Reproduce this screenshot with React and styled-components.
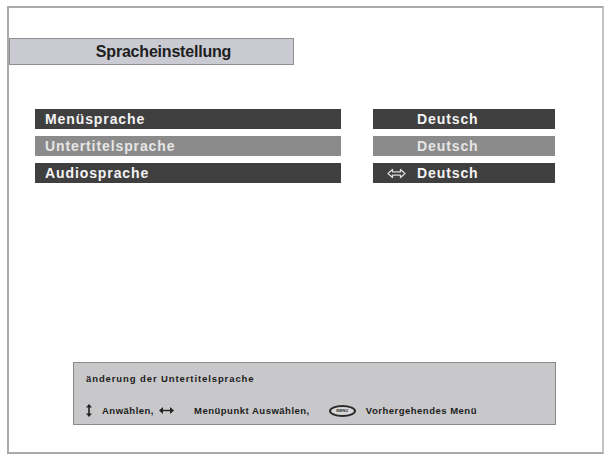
import React from "react";
import styled, { createGlobalStyle } from "styled-components";

const GlobalStyle = createGlobalStyle`
  html, body {
    margin: 0;
    padding: 0;
    background: #ffffff;
  }
  body {
    font-family: "Liberation Sans", Arial, sans-serif;
  }
`;

const rows = [
  { label: "Menüsprache", value: "Deutsch", tone: "dark" },
  { label: "Untertitelsprache", value: "Deutsch", tone: "light" },
  { label: "Audiosprache", value: "Deutsch", tone: "dark", arrow: true },
];

const App = () => {
  return (
    <Page>
      <GlobalStyle />
      <Frame>
        <Title>Spracheinstellung</Title>
        <Rows>
          {rows.map((r) => (
            <Row key={r.label}>
              <Label tone={r.tone}>{r.label}</Label>
              <Value tone={r.tone}>
                <ArrowSlot>{r.arrow && <SwapIcon />}</ArrowSlot>
                {r.value}
              </Value>
            </Row>
          ))}
        </Rows>
        <InfoBox>
          <InfoText>änderung der Untertitelsprache</InfoText>
          <Hints>
            <Hint $gap={10}>
              <UpDownIcon />
              Anwählen,
            </Hint>
            <Hint $gap={20} $space={5}>
              <LeftRightIcon />
              Menüpunkt Auswählen,
            </Hint>
            <Hint $gap={10} $space={19}>
              <MenuKey>MENU</MenuKey>
              Vorhergehendes Menü
            </Hint>
          </Hints>
        </InfoBox>
      </Frame>
    </Page>
  );
};

export default App;

const SwapIcon = () => (
  <svg width="19" height="11" viewBox="0 0 19 11">
    <path
      d="M1 5.5 L5.5 1.5 L5.5 3.8 L13.5 3.8 L13.5 1.5 L18 5.5 L13.5 9.5 L13.5 7.2 L5.5 7.2 L5.5 9.5 Z"
      fill="none"
      stroke="#dcdcdc"
      strokeWidth="1.3"
      strokeLinejoin="round"
    />
  </svg>
);

const UpDownIcon = () => (
  <svg width="6" height="13" viewBox="0 0 6 13">
    <path d="M3 0 L6 3.5 L0 3.5 Z M3 13 L6 9.5 L0 9.5 Z" fill="#222" />
    <rect x="2.2" y="3" width="1.6" height="7" fill="#222" />
  </svg>
);

const LeftRightIcon = () => (
  <svg width="15" height="7" viewBox="0 0 15 7">
    <path d="M0 3.5 L4 0 L4 7 Z M15 3.5 L11 0 L11 7 Z" fill="#222" />
    <rect x="3.5" y="2.8" width="8" height="1.4" fill="#222" />
  </svg>
);

const Page = styled.div`
  width: 607px;
  height: 456px;
  padding: 6px 0 0 7px;
  box-sizing: border-box;
`;

const Frame = styled.div`
  width: 597px;
  height: 448px;
  box-sizing: border-box;
  border: 2px solid #a9a9a9;
  border-right-color: #c4c4c4;
  display: flex;
  flex-direction: column;
`;

const Title = styled.div`
  margin-top: 30px;
  width: 285px;
  height: 27px;
  box-sizing: border-box;
  padding-left: 24px;
  background: #c9cad2;
  border: 1px solid #8f8f93;
  display: flex;
  align-items: center;
  justify-content: center;
  font-size: 16px;
  font-weight: bold;
  letter-spacing: -0.2px;
  color: #1e1e1e;
`;

const Rows = styled.div`
  margin-top: 44px;
  padding-left: 26px;
  display: flex;
  flex-direction: column;
  gap: 7px;
`;

const Row = styled.div`
  display: flex;
  gap: 32px;
  height: 20px;
`;

const Bar = styled.div`
  height: 20px;
  box-sizing: border-box;
  display: flex;
  align-items: center;
  font-size: 14px;
  font-weight: bold;
  letter-spacing: 0.9px;
  background: ${(p) => (p.tone === "light" ? "#8b8b8b" : "#3f3f3f")};
  color: ${(p) => (p.tone === "light" ? "#e6e6e6" : "#f4f4f4")};
`;

const Label = styled(Bar)`
  width: 306px;
  padding-left: 10px;
`;

const Value = styled(Bar)`
  width: 182px;
  padding-left: 14px;
`;

const ArrowSlot = styled.span`
  width: 30px;
  display: flex;
  align-items: center;
`;

const InfoBox = styled.div`
  margin: auto 0 27px 64px;
  width: 483px;
  height: 63px;
  box-sizing: border-box;
  background: #c8c8ca;
  border: 1px solid #8a8a8a;
  padding: 10px 0 0 12px;
  display: flex;
  flex-direction: column;
  gap: 20px;
`;

const InfoText = styled.div`
  font-size: 9.5px;
  font-weight: bold;
  letter-spacing: 0.9px;
  color: #1c1c1c;
`;

const Hints = styled.div`
  display: flex;
  align-items: center;
`;

const Hint = styled.div`
  display: flex;
  align-items: center;
  gap: ${(p) => p.$gap}px;
  margin-left: ${(p) => p.$space || 0}px;
  font-size: 9.5px;
  font-weight: bold;
  letter-spacing: 0.5px;
  color: #1c1c1c;
`;

const MenuKey = styled.span`
  width: 23px;
  height: 8px;
  border: 2px solid #2a2a2a;
  border-radius: 50%;
  background: #d8d8d8;
  color: #2a2a2a;
  font-size: 4px;
  letter-spacing: 0;
  display: flex;
  align-items: center;
  justify-content: center;
`;
